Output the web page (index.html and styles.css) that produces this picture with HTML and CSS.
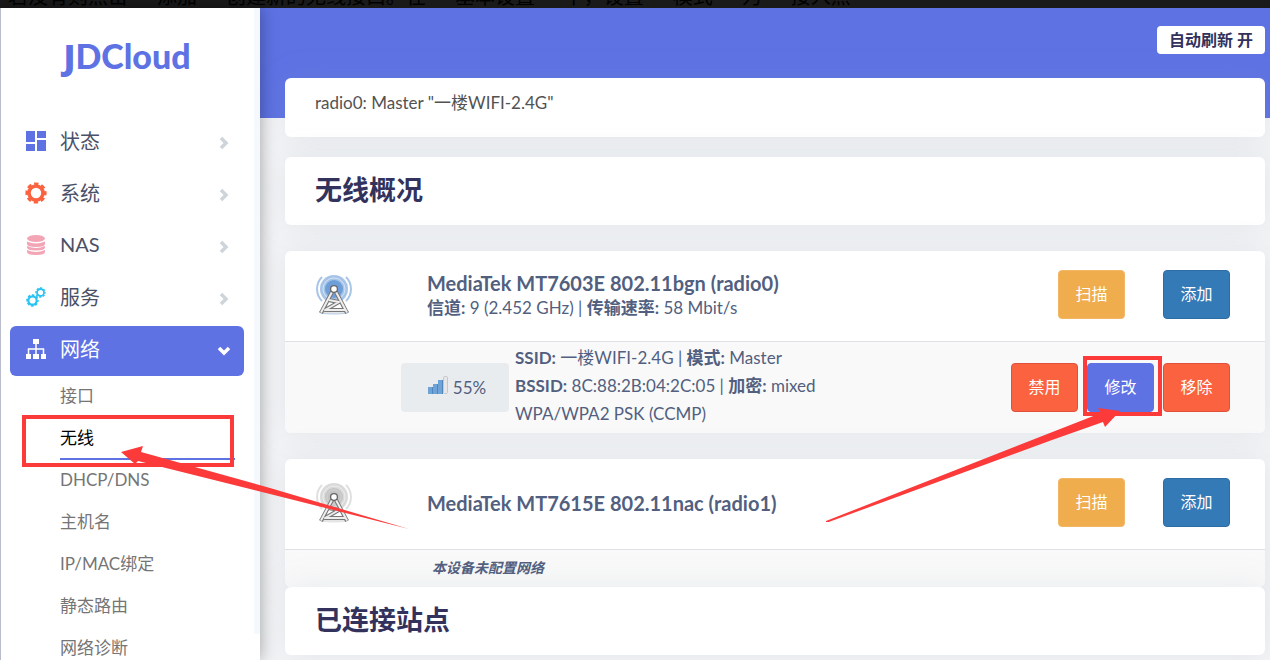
FILE: index.html
```html
<!DOCTYPE html>
<html lang="zh-CN">
<head>
	<meta charset="UTF-8">
	<meta name="viewport" content="width=device-width, initial-scale=1">
	<title>JDCloud - 无线</title>
	<link rel="stylesheet" href="styles.css">
</head>
<body>
	<!-- shared icons -->
	<svg class="defs" width="0" height="0">
		<symbol id="chevron" viewBox="0 0 10 14">
			<path d="M2 2l5 5-5 5" fill="none" stroke="currentColor" stroke-width="3.500"/>
		</symbol>
		<symbol id="gear" viewBox="0 0 22 22">
			<circle cx="11" cy="11" r="7" fill="none" stroke="currentColor" stroke-width="3.600"/>
			<circle cx="11" cy="11" r="9" fill="none" stroke="currentColor" stroke-width="3.200" stroke-dasharray="4.200 2.870" stroke-dashoffset="2.100"/>
		</symbol>
		<symbol id="antenna" viewBox="0 0 38 40">
			<circle class="wave" cx="19" cy="14" r="14" opacity=".55"/>
			<circle class="wave" cx="19" cy="14" r="9" opacity=".75"/>
			<g class="ring" fill="none" stroke-width="2">
				<path d="M7 2a17 17 0 0 0 0 24M31 2a17 17 0 0 1 0 24" opacity=".6"/>
				<circle cx="19" cy="14" r="11" stroke="#fff" stroke-width="1" opacity=".5"/>
				<circle cx="19" cy="14" r="7"/>
			</g>
			<ellipse cx="19" cy="37" rx="15" ry="2" fill="#ccc" opacity=".5"/>
			<g fill="none" stroke-linejoin="round">
				<path d="M17 17L6 38M21 17l11 21M14 25l10 2-14 8h20" stroke="#777" stroke-width="4"/>
				<path d="M17 17L6 37.500M21 17l11 20.500M14 25l10 2-14 8h20" stroke="#eee" stroke-width="2"/>
			</g>
			<circle cx="19" cy="14" r="3.400" fill="#fff" stroke="#666" stroke-width="1.300"/>
		</symbol>
	</svg>

	<div class="tipbar"><span>若没有则点击 “ 添加 ” 创建新的无线接口。在 “ 基本设置 ” 中，设置 “ 模式 ” 为 “ 接入点 ”</span></div>

	<div class="page">
		<aside class="sidebar">
			<a class="brand" href="#"><span>J</span>DCloud</a>
			<nav>
				<ul class="menu">
					<li><a class="item" href="#">
						<svg class="icon blue" viewBox="0 0 22 22"><path fill="currentColor" d="M1 1h9v11H1zM12 1h9v7h-9zM1 14h9v7H1zM12 10h9v11h-9z"/></svg>
						<span>状态</span><svg class="arrow"><use href="#chevron"/></svg></a></li>
					<li><a class="item" href="#">
						<svg class="icon orange"><use href="#gear"/></svg>
						<span>系统</span><svg class="arrow"><use href="#chevron"/></svg></a></li>
					<li><a class="item" href="#">
						<svg class="icon pink" viewBox="0 0 22 22"><g fill="currentColor"><ellipse cx="11" cy="4.500" rx="9" ry="3.500"/><path d="M2 7.500q9 4 18 0v2.500q0 3-9 3t-9-3zM2 12q9 4 18 0v1.500q0 3-9 3t-9-3zM2 16q9 4 18 0v2q0 3-9 3t-9-3z"/></g></svg>
						<span>NAS</span><svg class="arrow"><use href="#chevron"/></svg></a></li>
					<li><a class="item" href="#">
						<svg class="icon cyan" viewBox="0 0 22 22"><use href="#gear" x="1" y="8" width="13" height="13"/><use href="#gear" x="10" y="1" width="11" height="11"/></svg>
						<span>服务</span><svg class="arrow"><use href="#chevron"/></svg></a></li>
					<li><a class="item active" href="#">
						<svg class="icon" viewBox="0 0 22 22"><path fill="currentColor" d="M8 1h6v5H8zM1 16h5v5H1zM8 16h6v5H8zM16 16h5v5h-5z"/><path fill="none" stroke="currentColor" stroke-width="1.500" d="M11 6v10M3.500 16v-5h15v5"/></svg>
						<span>网络</span><svg class="arrow down"><use href="#chevron"/></svg></a>
						<ul class="submenu">
							<li><a href="#">接口</a></li>
							<li class="current"><a href="#">无线</a>
								<i class="mark mark-menu"></i>
								<svg class="pointer pointer-menu" viewBox="0 0 290 85"><path d="M0 6L22 0 20 6 149 42 288 83 149 48 17 15 14 18z"/></svg>
							</li>
							<li><a href="#">DHCP/DNS</a></li>
							<li><a href="#">主机名</a></li>
							<li><a href="#">IP/MAC绑定</a></li>
							<li><a href="#">静态路由</a></li>
							<li><a href="#">网络诊断</a></li>
						</ul>
					</li>
				</ul>
			</nav>
		</aside>

		<main class="main">
			<header class="header">
				<button class="refresh" type="button">自动刷新 开</button>
			</header>

			<div class="content">
				<div class="card tabs"><a href="#">radio0: Master "一楼WIFI-2.4G"</a></div>
				<div class="card title"><h2>无线概况</h2></div>

				<section class="card radio">
					<div class="device">
						<svg class="antenna on"><use href="#antenna"/></svg>
						<div class="info">
							<h3>MediaTek MT7603E 802.11bgn (radio0)</h3>
							<p><b>信道:</b> 9 (2.452 GHz) | <b>传输速率:</b> 58 Mbit/s</p>
						</div>
						<div class="actions wide">
							<button class="btn scan" type="button">扫描</button>
							<button class="btn add" type="button">添加</button>
						</div>
					</div>
					<div class="network">
						<div class="signal">
							<svg viewBox="0 0 20 20"><path fill="#6fa3d6" d="M0 12h5v7H0zM5 9h5v10H5zM10 5h5v14h-5z"/><path fill="#4f86c0" d="M4 12h1v7H4zM9 9h1v10H9zM14 5h1v14h-1z"/><rect x="15.500" y="1.500" width="4" height="17" rx="1" fill="#e6e6e6" stroke="#c4c8cc"/></svg>
							<span>55%</span>
						</div>
						<p class="details"><b>SSID:</b> 一楼WIFI-2.4G | <b>模式:</b> Master<br><b>BSSID:</b> 8C:88:2B:04:2C:05 | <b>加密:</b> mixed<br>WPA/WPA2 PSK (CCMP)</p>
						<div class="actions">
							<button class="btn danger" type="button">禁用</button>
							<div class="marked">
								<button class="btn edit" type="button">修改</button>
								<i class="mark mark-edit"></i>
								<svg class="pointer pointer-edit" viewBox="0 0 294 114"><path d="M294 3L272 0 275 5 206 32 0 113v2L226 32 277 14 279 19z"/></svg>
							</div>
							<button class="btn danger" type="button">移除</button>
						</div>
					</div>
				</section>

				<section class="card radio last">
					<div class="device">
						<svg class="antenna"><use href="#antenna"/></svg>
						<div class="info">
							<h3>MediaTek MT7615E 802.11nac (radio1)</h3>
						</div>
						<div class="actions wide">
							<button class="btn scan" type="button">扫描</button>
							<button class="btn add" type="button">添加</button>
						</div>
					</div>
					<div class="network empty"><em>本设备未配置网络</em></div>
				</section>

				<div class="card title"><h2>已连接站点</h2></div>
			</div>
		</main>
	</div>
</body>
</html>
```
FILE: styles.css
```css
* {
	box-sizing: border-box;
}
body {
	margin: 0;
	height: 100vh;
	overflow: hidden;
	display: flex;
	flex-direction: column;
	background: #f3f4f6;
	color: #525f7f;
	font-family: Lato, "Noto Sans CJK SC", sans-serif;
	font-size: 17px;
}
a {
	color: inherit;
	text-decoration: none;
}
ul, p, h2, h3 {
	margin: 0;
	padding: 0;
	list-style: none;
}
.defs {
	position: absolute;
}
.tipbar {
	flex: none;
	display: flex;
	align-items: flex-end;
	height: 8px;
	padding-left: 8px;
	overflow: hidden;
	background: #1a1a1a;
	color: #000;
	font-family: "Noto Sans CJK SC", sans-serif;
	font-size: 20px;
	line-height: 24px;
	white-space: nowrap;
}
.page {
	flex: 1;
	min-height: 0;
	display: flex;
}

/* sidebar */
.sidebar {
	position: relative;
	z-index: 2;
	flex: none;
	width: 260px;
	padding: 26px 16px 0 9px;
	background: linear-gradient(#f5f9fe, #f5f9fe) right top / 6px 96% no-repeat #fff;
	border-left: 1px solid #b9bccb;
	box-shadow: 0 0 16px rgba(0, 0, 0, .35);
}
.brand {
	display: block;
	height: 84px;
	text-align: center;
	color: #5e72e4;
	font-size: 34px;
	font-weight: 900;
	line-height: 44px;
}
.brand span {
	font-family: "Open Sans", sans-serif;
	font-weight: 800;
}
.item {
	display: flex;
	align-items: center;
	height: 50px;
	margin-bottom: 2px;
	padding: 0 15px 4px;
	border-radius: 6px;
	color: #4a5068;
	font-size: 20px;
}
.item span {
	flex: 1;
	margin: 0 0 2px 13px;
}
.item.active {
	margin-bottom: 0;
	background: #5e72e4;
	color: #fff;
}
.icon {
	width: 22px;
	height: 22px;
}
.blue { color: #5e72e4; }
.orange { color: #fb6340; }
.pink { color: #f3a4b5; }
.cyan { color: #2bc4f2; }
.arrow {
	width: 10px;
	height: 14px;
	margin: 4px 0 0;
	color: #ced4da;
}
.arrow.down {
	color: #fff;
	transform: rotate(90deg);
}
.submenu {
	padding: 0 9px 0 50px;
}
.submenu li {
	position: relative;
	height: 42px;
	color: #757575;
	font-size: 17px;
	line-height: 40px;
}
.submenu li a {
	display: block;
}
.submenu .current {
	border-bottom: 2px solid #5e72e4;
	color: #000;
}

/* main */
.main {
	flex: 1;
	min-width: 0;
}
.header {
	display: flex;
	justify-content: flex-end;
	align-items: flex-start;
	height: 110px;
	padding: 18px 5px 0;
	background: #5e72e4;
}
.refresh {
	height: 28px;
	padding: 0 12px;
	border: 0;
	border-radius: 4px;
	background: #fff;
	color: #32325d;
	font: bold 16px/26px Lato, "Noto Sans CJK SC", sans-serif;
}
.content {
	margin: -40px 5px 0 25px;
}
.card {
	border-radius: 6px;
	background: #fff;
	box-shadow: 0 0 32px rgba(136, 152, 170, .15);
}
.tabs {
	height: 59px;
	margin-bottom: 20px;
	padding: 0 30px;
	color: #525252;
	line-height: 50px;
}
.title {
	height: 68px;
	margin-bottom: 26px;
	padding: 0 30px;
}
h2 {
	color: #32325d;
	font-size: 27px;
	font-weight: bold;
	line-height: 66px;
}
.radio {
	margin-bottom: 26px;
}
.radio.last {
	margin-bottom: 0;
}
.device {
	display: flex;
	align-items: center;
	height: 90px;
	padding: 0 35px 3px 30px;
}
.antenna {
	flex: none;
	width: 38px;
	height: 40px;
	margin-right: 74px;
	fill: #bbb;
	stroke: #ccc;
}
.antenna.on {
	fill: #5c93d6;
	stroke: #6f9fd8;
}
.wave {
	stroke: none;
}
.info {
	flex: 1;
}
h3 {
	font-size: 20px;
	line-height: 26px;
}
.info p {
	line-height: 24px;
}
.actions {
	display: flex;
	gap: 9px;
}
.actions.wide {
	gap: 38px;
}
.btn {
	width: 67px;
	height: 49px;
	padding: 0 0 4px;
	border: 1px solid;
	border-radius: 4px;
	color: #fff;
	font: 16px Lato, "Noto Sans CJK SC", sans-serif;
}
.scan {
	background: #f0ad4e;
	border-color: #f2b764;
}
.add {
	background: #337ab7;
	border-color: #2e6da4;
}
.danger {
	background: #fb6340;
	border-color: #e0503c;
}
.edit {
	background: #5e72e4;
	border-color: #5e72e4;
}
.network {
	display: flex;
	align-items: center;
	height: 92px;
	padding: 0 35px 0 116px;
	border-top: 1px solid #dee2e6;
	border-radius: 0 0 6px 6px;
	background: #f9f9f9;
}
.network.empty {
	height: 38px;
	padding: 0 35px 3px 147px;
	font-size: 14px;
	font-weight: bold;
}
.signal {
	display: flex;
	justify-content: center;
	align-items: center;
	gap: 5px;
	width: 108px;
	height: 49px;
	margin-right: 6px;
	padding-left: 4px;
	border-radius: 4px;
	background: #e9ecef;
}
.signal svg {
	width: 20px;
	height: 20px;
	margin-bottom: 6px;
}
.details {
	flex: 1;
	padding-bottom: 3px;
	line-height: 28px;
}

/* red marks and pointers over the page */
.marked {
	position: relative;
}
.mark {
	position: absolute;
	border: 4px solid #fc3a3a;
}
.mark-menu {
	top: -3px;
	left: -38px;
	right: 1px;
	height: 52px;
}
.mark-edit {
	top: -7px;
	left: -4px;
	width: 79px;
	height: 60px;
}
.pointer {
	position: absolute;
	z-index: 3;
	fill: #fc3a3a;
	pointer-events: none;
}
.pointer-menu {
	top: 28px;
	left: 61px;
	width: 290px;
	height: 85px;
}
.pointer-edit {
	top: 45px;
	right: 34px;
	width: 294px;
	height: 114px;
}
```
